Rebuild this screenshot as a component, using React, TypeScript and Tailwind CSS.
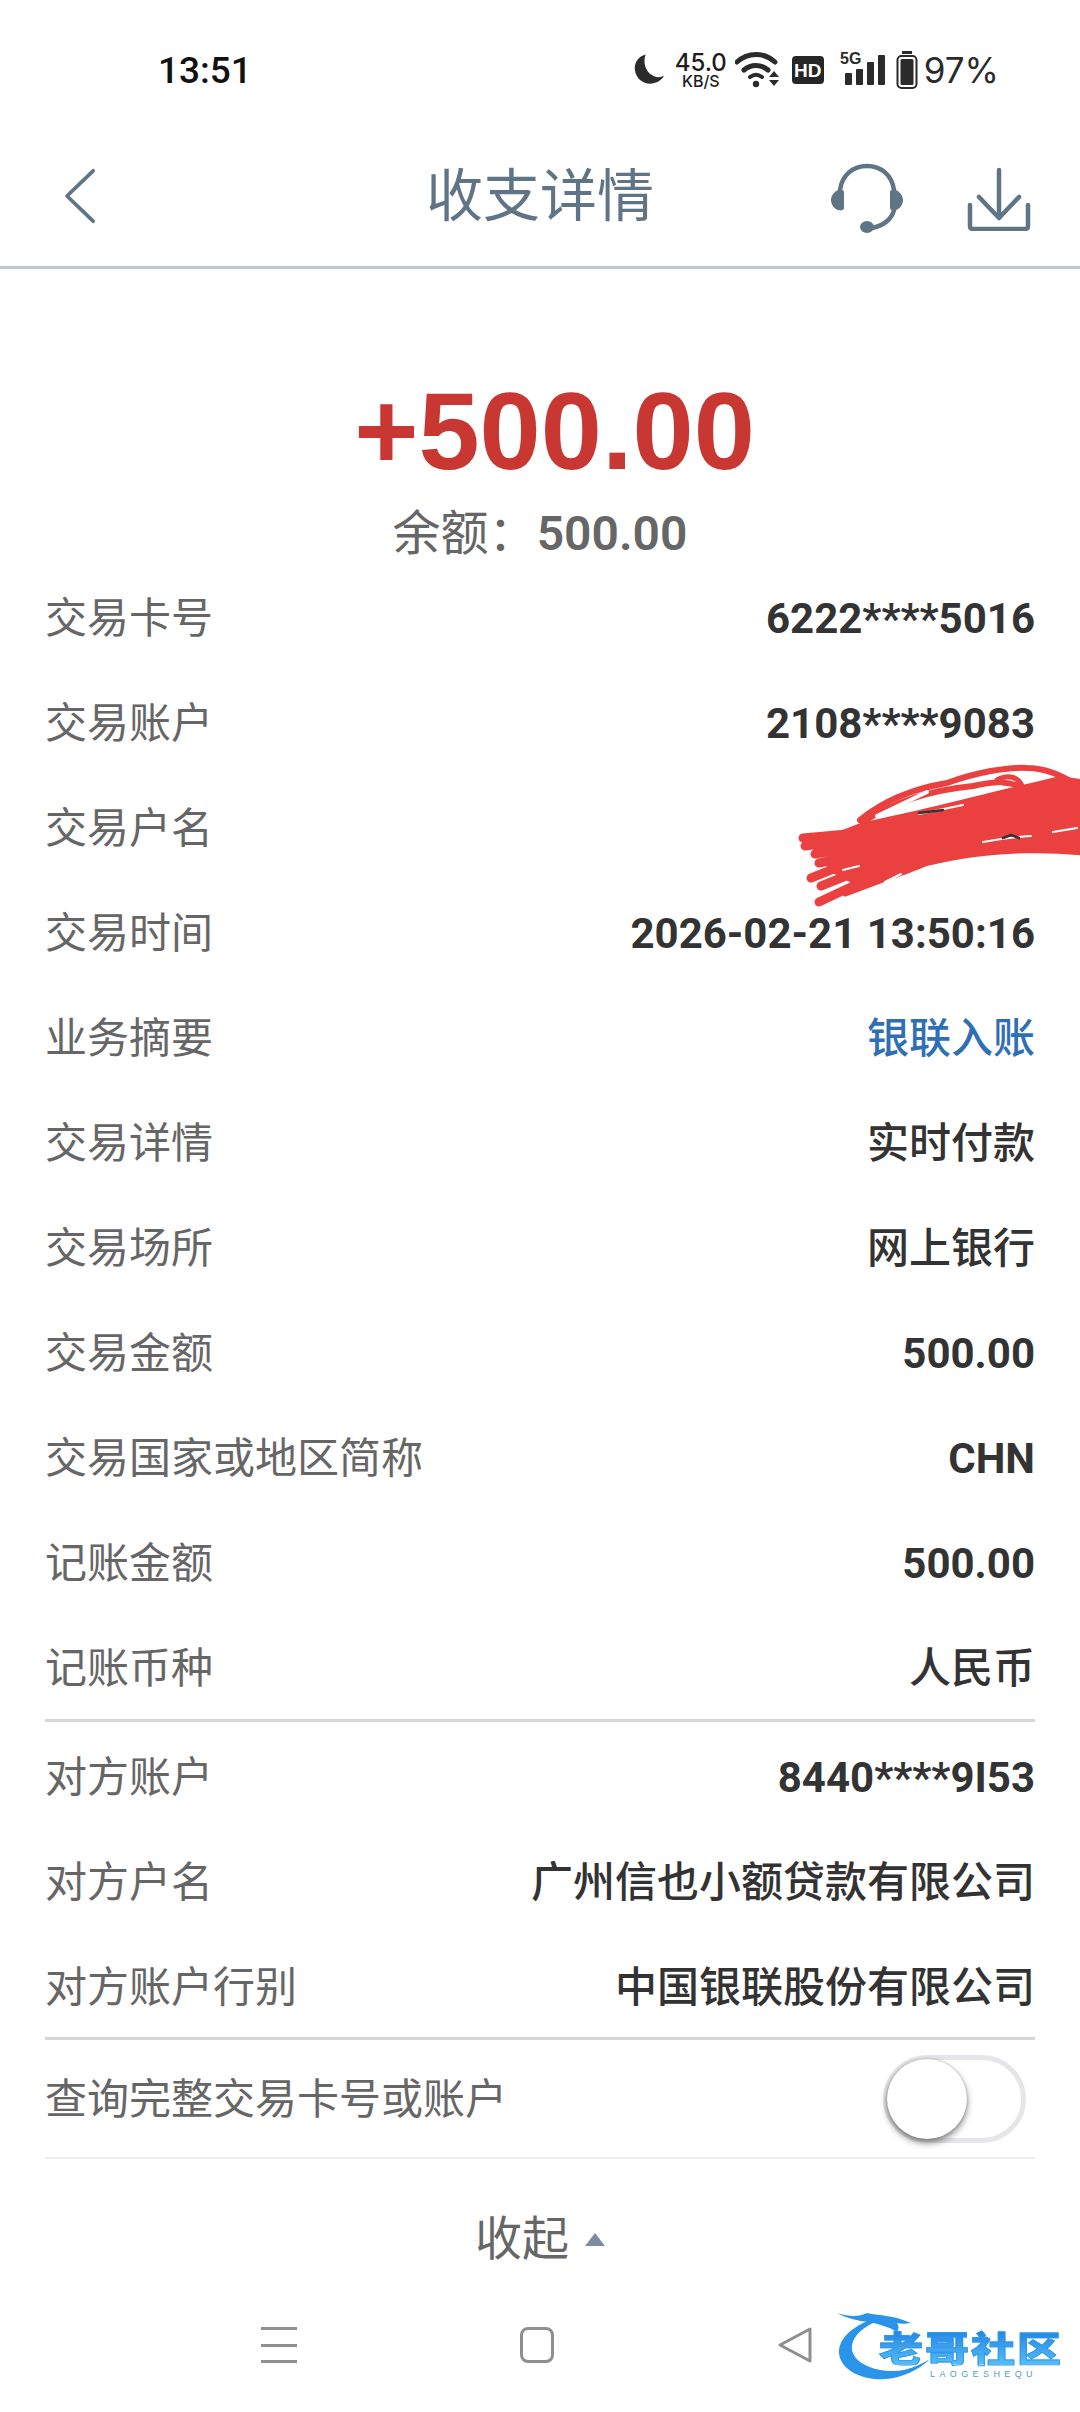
const CJK = "font-['Roboto','Noto_Sans_CJK_SC',sans-serif]";

const topRows = [
  { label: "交易卡号", value: "6222****5016" },
  { label: "交易账户", value: "2108****9083" },
  { label: "交易户名", value: "" },
  { label: "交易时间", value: "2026-02-21 13:50:16" },
  { label: "业务摘要", value: "银联入账", link: true, cjk: true },
  { label: "交易详情", value: "实时付款", cjk: true },
  { label: "交易场所", value: "网上银行", cjk: true },
  { label: "交易金额", value: "500.00" },
  { label: "交易国家或地区简称", value: "CHN" },
  { label: "记账金额", value: "500.00" },
  { label: "记账币种", value: "人民币", cjk: true },
];

const otherRows = [
  { label: "对方账户", value: "8440****9I53" },
  { label: "对方户名", value: "广州信也小额贷款有限公司", cjk: true },
  { label: "对方账户行别", value: "中国银联股份有限公司", cjk: true },
];

type RowProps = { label: string; value: string; link?: boolean; cjk?: boolean };

function Row({ label, value, link, cjk }: RowProps) {
  return (
    <div className="flex h-[105px] items-center justify-between">
      <span className="text-[42px] text-[#666666]">{label}</span>
      <span className={`text-[42px] ${cjk ? "font-medium" : "font-bold"} ${link ? "text-[#2f6fb5]" : "text-[#333333]"}`}>
        {value}
      </span>
    </div>
  );
}

function StatusIcons() {
  return (
    <div className="flex items-center">
      <svg width="33" height="34" viewBox="0 0 34 34">
        <path d="M13 1C5 3 1 10 2 17c1 9 9 15 18 14 5-1 9-3 12-8-4 2-9 2-13-1C13 18 10 9 13 1Z" fill="#2b2b2b" />
      </svg>
      <div className="ml-[9px] flex w-[52px] flex-col items-center font-['Inter',sans-serif] text-[#1c1c1c]">
        <span className="text-[24px] leading-[23px] font-medium">45.0</span>
        <span className="text-[16px] leading-[15px] font-medium">KB/S</span>
      </div>
      <svg width="46" height="38" viewBox="0 0 46 38" className="ml-[8px]">
        <path d="M2 11C13 1 29 1 40 11" fill="none" stroke="#2b2b2b" strokeWidth="5" strokeLinecap="round" />
        <path d="M9 19c7-6 17-6 24 0" fill="none" stroke="#2b2b2b" strokeWidth="5" strokeLinecap="round" />
        <path d="M15 26c4-3 8-3 12 0" fill="none" stroke="#2b2b2b" strokeWidth="4" strokeLinecap="round" />
        <circle cx="21" cy="33" r="3.2" fill="#2b2b2b" />
        <path d="M34 26l5-6 5 6ZM34 29l5 6 5-6Z" fill="#2b2b2b" />
      </svg>
      <div className="ml-[11px] flex h-[28px] w-[32px] items-center justify-center rounded-[4px] bg-[#262626] font-['Liberation_Sans',sans-serif] text-[19px] leading-none font-bold text-white">
        HD
      </div>
      <svg width="48" height="38" viewBox="0 0 48 38" className="ml-[16px]">
        <text x="0" y="13" fontSize="16" fontWeight="700" fill="#2b2b2b" fontFamily="Liberation Sans">5G</text>
        <rect x="5" y="22" width="7" height="12" fill="#2b2b2b" rx="1" />
        <rect x="16" y="18" width="7" height="16" fill="#2b2b2b" rx="1" />
        <rect x="27" y="11" width="7" height="23" fill="#2b2b2b" rx="1" />
        <rect x="38" y="4" width="7" height="30" fill="#2b2b2b" rx="1" />
      </svg>
      <svg width="22" height="40" viewBox="0 0 22 40" className="ml-[8px]">
        <rect x="6" y="1" width="10" height="3" fill="#2b2b2b" />
        <rect x="1.5" y="6" width="19" height="32" rx="4" fill="none" stroke="#2b2b2b" strokeWidth="2" />
        <rect x="4.5" y="9" width="13" height="26" rx="1.5" fill="#2b2b2b" />
      </svg>
      <span className="ml-[6px] font-['Inter',sans-serif] text-[35px] leading-none text-[#2b2b2b]">97%</span>
    </div>
  );
}

function Scribble() {
  return (
    <svg
      width="290"
      height="150"
      viewBox="0 0 290 150"
      fill="none"
      strokeLinecap="round"
      strokeLinejoin="round"
      className="absolute top-[-16px] right-[-52px]"
    >
      <g stroke="#ea4040">
        <path d="M63 60C90 38 120 28 150 23 180 12 210 7 230 8c24 0 44 12 60 24" strokeWidth="6" />
        <path d="M66 62c30-20 70-32 110-36 14-3 30-6 46 0" strokeWidth="6" />
        <path d="M200 20c10-6 22-4 26 8" strokeWidth="5" />
        <path d="M6 78l66-6M8 86l66-8M18 94l60-10M22 103l60-12M14 118l70-28M24 126l60-24M22 142l72-34M48 132l64-24" strokeWidth="9" />
      </g>
      <path
        d="M30 76 66 62C110 54 170 38 263 16l27 4v76C250 92 196 90 130 106c-20 8-50 20-70 20L30 110Z"
        fill="#ea4040"
      />
      <path d="M122 54l44-9M186 82c16-3 30-5 48-6M256 72l24-4M46 110l16-4M88 122l16-8" stroke="white" strokeWidth="2" />
      <path d="M122 53l24-3M206 78l8-3 8 3" stroke="#333333" strokeWidth="2.5" />
      <path d="M80 56l50-24M168 33l36-6" stroke="white" strokeWidth="4" />
    </svg>
  );
}

function Logo() {
  return (
    <div className="absolute top-[33px] right-[14px] h-[76px] w-[230px]">
      <svg width="230" height="76" viewBox="0 0 230 76" className="absolute top-0 left-0">
        <path d="M36 9C16 17 3 28 3 42c0 20 32 34 62 24 12-4 22-10 29-17-12 7-26 13-40 12C32 60 14 50 16 35 18 25 28 16 42 11Z" fill="#2a93ea" />
        <path d="M1 3c12 4 22 4 30 0 14 3 26 2 44 10-6 1-10 1-14 0 2 3 2 6 0 9-8-5-18-8-28-10C22 11 10 8 1 3Z" fill="#2a93ea" />
      </svg>
      <span className="absolute top-[15px] left-[43px] origin-center scale-y-[0.8] bg-gradient-to-b from-[#1f82e2] to-[#58bdf5] bg-clip-text font-['Noto_Sans_CJK_SC',sans-serif] text-[44px] leading-none font-black tracking-[2px] whitespace-nowrap text-transparent [-webkit-text-stroke:1px_#2f96ea]">
        老哥社区
      </span>
      <span className="absolute top-[60px] left-[94px] font-['Liberation_Sans',sans-serif] text-[9px] leading-none tracking-[4.4px] text-[#4a9ee0]">
        LAOGESHEQU
      </span>
    </div>
  );
}

export default function App() {
  return (
    <div className={`flex h-[2412px] w-[1080px] flex-col overflow-hidden bg-white ${CJK}`}>
      <div className="flex h-[136px] items-center justify-between pt-[4px] pr-[81px] pl-[158px]">
        <span className="font-['Roboto',sans-serif] text-[37px] leading-none font-medium text-[#111111]">13:51</span>
        <StatusIcons />
      </div>

      <div className="relative flex h-[133px] shrink-0 items-center justify-center border-b-[3px] border-[#b9c9cd]">
        <span className="pb-[10px] text-[57px] leading-none text-[#5f7485]">收支详情</span>
        <div className="absolute top-0 right-[49px] bottom-0 left-[62px] flex items-center justify-between">
          <svg width="38" height="56" viewBox="0 0 38 60" fill="none" stroke="#5f7485" strokeWidth="4" strokeLinecap="round" strokeLinejoin="round" className="mb-[10px]">
            <path d="M32 3 4 30l28 27" />
          </svg>
          <div className="flex items-start gap-[64px] pb-[6px]">
            <svg width="72" height="70" viewBox="0 0 72 70" fill="none" stroke="#5f7485" strokeWidth="4.5" strokeLinecap="round">
              <path d="M9 27C11 12 22 3 36 3s25 9 27 24" />
              <path d="M63 47C61 56 52 63 41 65" />
              <path d="M7 27c-4 2-7 6-7 10s3 9 7 10c3 1 6 0 6-2V29c0-2-3-3-6-2Z" fill="#5f7485" stroke="none" />
              <path d="M65 27c4 2 7 6 7 10s-3 9-7 10c-3 1-6 0-6-2V29c0-2 3-3 6-2Z" fill="#5f7485" stroke="none" />
              <ellipse cx="36" cy="64" rx="7" ry="6" fill="#5f7485" stroke="none" />
            </svg>
            <svg width="64" height="64" viewBox="0 0 64 64" fill="none" stroke="#5f7485" strokeWidth="4.5" strokeLinecap="round" strokeLinejoin="round" className="mt-[4px]">
              <path d="M32 3v47M12 30l20 21 20-21" />
              <path d="M3 38v21c0 2 1 3 3 3h52c2 0 3-1 3-3V38" />
            </svg>
          </div>
        </div>
      </div>

      <div className="flex flex-col items-center pt-[112px]">
        <span className="ml-[29px] font-['Liberation_Sans',sans-serif] text-[110px] leading-[100px] font-bold text-[#c93732]">+500.00</span>
        <span className="mt-[26px] text-[48px] leading-[54px] text-[#666666]">
          余额：<span className="font-semibold">500.00</span>
        </span>
      </div>

      <div className="flex flex-col px-[45px] pt-[5px]">
        {topRows.map((row) => (
          <div key={row.label} className={row.label === "交易户名" ? "relative" : ""}>
            <Row {...row} />
            {row.label === "交易户名" && <Scribble />}
          </div>
        ))}
        <div className="-mt-[2px] border-t-[3px] border-[#d6d6d6] [&>div]:pt-[5px]">
          {otherRows.map((row) => (
            <Row key={row.label} {...row} />
          ))}
        </div>
        <div className="flex h-[122px] items-center justify-between border-t-[3px] border-b-[2px] border-t-[#d6d6d6] border-b-[#eeeeee] pr-[9px]">
          <span className="pt-[2px] text-[42px] text-[#666666]">查询完整交易卡号或账户</span>
          <div className="flex h-[88px] w-[143px] items-center rounded-full border-[5px] border-[#e6e6ea]">
            <div className="-ml-[1px] h-[80px] w-[80px] shrink-0 rounded-full bg-white shadow-[0_4px_7px_rgba(0,0,0,0.45),0_0_3px_rgba(0,0,0,0.25)]" />
          </div>
        </div>
      </div>

      <div className="flex h-[118px] items-center justify-center gap-[16px] pt-[40px]">
        <span className="text-[47px] leading-none text-[#666666]">收起</span>
        <div className="mt-[2px] h-0 w-0 border-x-[10px] border-b-[13px] border-x-transparent border-b-[#7f8aa3]" />
      </div>

      <div className="relative flex flex-1 items-start justify-center pt-[49px] pr-[6px]">
        <div className="flex w-[552px] items-center justify-between">
          <div className="flex h-[36px] w-[36px] flex-col justify-between">
            <div className="h-[3px] bg-[#8f8f8f]" />
            <div className="h-[3px] bg-[#8f8f8f]" />
            <div className="h-[3px] bg-[#8f8f8f]" />
          </div>
          <div className="h-[36px] w-[34px] rounded-[8px] border-[3px] border-[#8f8f8f]" />
          <svg width="36" height="38" viewBox="0 0 36 38" fill="none" stroke="#8f8f8f" strokeWidth="3" strokeLinejoin="round">
            <path d="M33 3 3 19l30 16Z" />
          </svg>
        </div>
        <Logo />
      </div>
    </div>
  );
}
